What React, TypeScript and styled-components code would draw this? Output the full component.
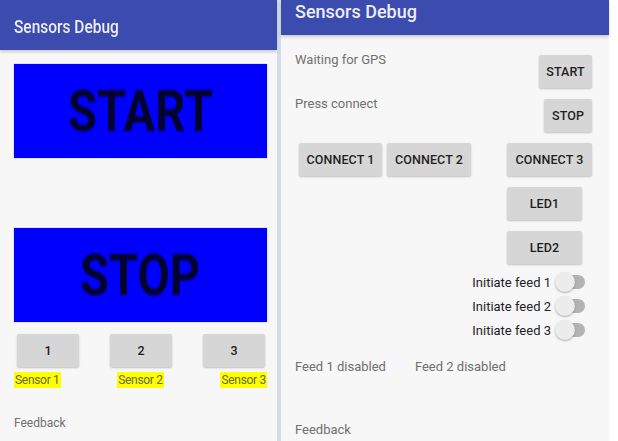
import React from "react";
import styled, { createGlobalStyle } from "styled-components";

const GlobalStyle = createGlobalStyle`
  html, body { margin: 0; padding: 0; background: #ffffff; }
  body { font-family: Roboto, "Noto Sans", sans-serif; }
  * { box-sizing: border-box; }
`;

const Page = styled.div`
  display: flex;
  height: 441px;
  overflow: hidden;
  background: #ffffff;
`;

const Screen = styled.div<{ $width: number }>`
  width: ${(p) => p.$width}px;
  flex: none;
  background: #f7f7f7;
  display: flex;
  flex-direction: column;
`;

const Divider = styled.div`
  width: 4px;
  flex: none;
  background: #d4dbeb;
`;

const Toolbar = styled.div<{ $height: number; $padTop: number }>`
  height: ${(p) => p.$height}px;
  flex: none;
  background: #3b4bae;
  box-shadow: 0 2px 3px rgba(0, 0, 0, 0.18);
  padding: ${(p) => p.$padTop}px 0 0 14px;
  position: relative;
  z-index: 1;
`;

const Title = styled.div<{ $scale: number }>`
  color: #eceef8;
  font-size: 18px;
  font-weight: 500;
  line-height: 22px;
  transform: scaleX(${(p) => p.$scale});
  transform-origin: left center;
`;

/* ---------- left screen ---------- */

const LeftBody = styled.div`
  display: flex;
  flex-direction: column;
  padding: 14px 10px 0 14px;
`;

const BigButton = styled.div<{ $gap: number }>`
  height: 94px;
  margin-top: ${(p) => p.$gap}px;
  background: #0000ff;
  box-shadow: 0 0 1px rgba(0, 0, 80, 0.5);
  display: flex;
  align-items: center;
  justify-content: center;
`;

const BigLabel = styled.span`
  color: #03032e;
  font-size: 58px;
  font-weight: 700;
  line-height: 1;
  display: inline-block;
  transform: scaleX(0.81);
  filter: blur(0.8px);
`;

const SpreadRow = styled.div<{ $gap: number; $pad: string }>`
  display: flex;
  justify-content: space-between;
  margin-top: ${(p) => p.$gap}px;
  padding: ${(p) => p.$pad};
`;

const GrayButton = styled.div<{ $w: number; $h?: number }>`
  width: ${(p) => p.$w}px;
  height: ${(p) => p.$h ?? 33}px;
  flex: none;
  background: #d6d6d6;
  border-radius: 2px;
  box-shadow: 0 1px 2px rgba(0, 0, 0, 0.22);
  display: flex;
  align-items: center;
  justify-content: center;
  color: #1f1f1f;
  font-size: 12.5px;
  font-weight: 500;
  letter-spacing: 0.1px;
`;

const SensorLabel = styled.span`
  background: #ffff00;
  color: #6a6a2a;
  font-size: 12px;
  line-height: 16px;
  height: 16px;
  padding: 0 1px;
  letter-spacing: -0.3px;
`;

const MutedText = styled.div<{ $gap?: number; $size?: number }>`
  margin-top: ${(p) => p.$gap ?? 0}px;
  color: #707070;
  font-size: ${(p) => p.$size ?? 13}px;
  line-height: 15px;
  white-space: nowrap;
`;

/* ---------- right screen ---------- */

const RightBody = styled.div`
  display: flex;
  flex-direction: column;
  padding: 17px 17px 0 14px;
`;

const StatusRow = styled.div<{ $gap: number }>`
  display: flex;
  justify-content: space-between;
  align-items: flex-start;
  margin-top: ${(p) => p.$gap}px;
`;

const RowButton = styled(GrayButton)`
  margin-top: 3px;
`;

const ConnectRow = styled.div`
  display: flex;
  gap: 5px;
  margin: 11px 0 0 4px;
`;

const PushRight = styled.div`
  margin-left: auto;
`;

const LedColumn = styled.div`
  display: flex;
  flex-direction: column;
  gap: 11px;
  margin: 11px 0 0 auto;
  width: 85px;
`;

const ToggleList = styled.div`
  display: flex;
  flex-direction: column;
  align-items: flex-end;
  margin: 6px 5px 0 0;
`;

const ToggleRow = styled.div`
  height: 24px;
  display: flex;
  align-items: center;
  gap: 4px;
`;

const ToggleText = styled.span`
  color: #222222;
  font-size: 13px;
`;

const Switch = styled.div`
  position: relative;
  width: 32px;
  height: 22px;
`;

const Track = styled.div`
  position: absolute;
  left: 2px;
  right: 2px;
  top: 4px;
  height: 14px;
  border-radius: 7px;
  background: #b3b3b3;
`;

const Thumb = styled.div`
  position: absolute;
  left: 0;
  top: 1px;
  width: 20px;
  height: 20px;
  border-radius: 50%;
  background: #ececec;
  box-shadow: 0 1px 2px rgba(0, 0, 0, 0.3);
`;

const FeedRow = styled.div`
  display: flex;
  gap: 29px;
  margin-top: 17px;
`;

const toggles = ["Initiate feed 1", "Initiate feed 2", "Initiate feed 3"];

export default function App() {
  return (
    <>
      <GlobalStyle />
      <Page>
        <Screen $width={277}>
          <Toolbar $height={50} $padTop={16}>
            <Title $scale={0.86}>Sensors Debug</Title>
          </Toolbar>
          <LeftBody>
            <BigButton $gap={0}>
              <BigLabel>START</BigLabel>
            </BigButton>
            <BigButton $gap={70}>
              <BigLabel>STOP</BigLabel>
            </BigButton>
            <SpreadRow $gap={12} $pad="0 2px 0 3px">
              <GrayButton $w={62}>1</GrayButton>
              <GrayButton $w={62}>2</GrayButton>
              <GrayButton $w={62}>3</GrayButton>
            </SpreadRow>
            <SpreadRow $gap={5} $pad="0">
              <SensorLabel>Sensor 1</SensorLabel>
              <SensorLabel>Sensor 2</SensorLabel>
              <SensorLabel>Sensor 3</SensorLabel>
            </SpreadRow>
            <MutedText $gap={28} $size={12}>Feedback</MutedText>
          </LeftBody>
        </Screen>
        <Divider />
        <Screen $width={328}>
          <Toolbar $height={35} $padTop={1}>
            <Title $scale={1}>Sensors Debug</Title>
          </Toolbar>
          <RightBody>
            <StatusRow $gap={0}>
              <MutedText>Waiting for GPS</MutedText>
              <RowButton $w={53}>START</RowButton>
            </StatusRow>
            <StatusRow $gap={8}>
              <MutedText>Press connect</MutedText>
              <RowButton $w={48}>STOP</RowButton>
            </StatusRow>
            <ConnectRow>
              <GrayButton $w={83}>CONNECT 1</GrayButton>
              <GrayButton $w={84}>CONNECT 2</GrayButton>
              <PushRight>
                <GrayButton $w={85}>CONNECT 3</GrayButton>
              </PushRight>
            </ConnectRow>
            <LedColumn>
              <GrayButton $w={75}>LED1</GrayButton>
              <GrayButton $w={75}>LED2</GrayButton>
            </LedColumn>
            <ToggleList>
              {toggles.map((t) => (
                <ToggleRow key={t}>
                  <ToggleText>{t}</ToggleText>
                  <Switch>
                    <Track />
                    <Thumb />
                  </Switch>
                </ToggleRow>
              ))}
            </ToggleList>
            <FeedRow>
              <MutedText>Feed 1 disabled</MutedText>
              <MutedText>Feed 2 disabled</MutedText>
            </FeedRow>
            <MutedText $gap={48}>Feedback</MutedText>
          </RightBody>
        </Screen>
      </Page>
    </>
  );
}
